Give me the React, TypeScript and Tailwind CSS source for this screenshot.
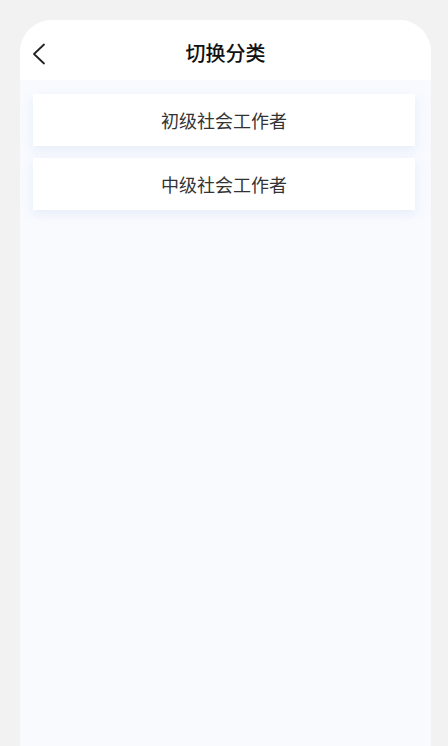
const categories = ['初级社会工作者', '中级社会工作者'];

const BackIcon = () => (
  <svg width="14" height="22" viewBox="0 0 14 22" fill="none">
    <path d="M12 1.5L2 11l10 9.5" stroke="#222" strokeWidth="1.8" strokeLinecap="round" strokeLinejoin="round" />
  </svg>
);

export default function App() {
  return (
    <div
      className="min-h-[746px] h-[746px] overflow-hidden bg-[#f2f2f2] pt-[20px] pl-[20px] pr-[17px]"
      style={{ fontFamily: '"Noto Sans CJK SC", "Noto Sans", sans-serif' }}
    >
      <div className="h-full bg-[#f8fafe] rounded-t-[32px] overflow-hidden flex flex-col">
        <header className="h-[60px] bg-white relative flex items-center justify-center shrink-0">
          <button className="absolute left-[12px] top-[23px]">
            <BackIcon />
          </button>
          <h1 className="mt-[6px] text-[20px] text-[#111] font-medium">切换分类</h1>
        </header>
        <div className="flex flex-col gap-[12px] pt-[14px] pl-[13px] pr-[16px]">
          {categories.map((c) => (
            <div
              key={c}
              className="h-[52px] bg-white flex items-center justify-center text-[18px] text-[#333] shadow-[0_4px_10px_rgba(210,225,245,0.45)]"
            >
              {c}
            </div>
          ))}
        </div>
      </div>
    </div>
  );
}
